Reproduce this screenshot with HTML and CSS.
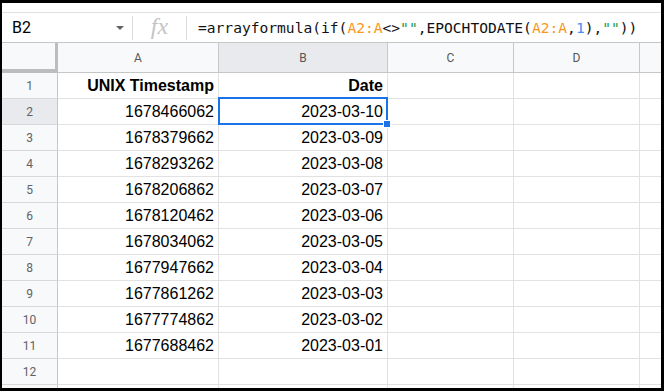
FILE: index.html
```html
<!DOCTYPE html>
<html lang="en">
<head>
  <meta charset="UTF-8">
  <title>EPOCHTODATE</title>
  <link rel="stylesheet" href="styles.css">
</head>
<body>
  <div class="frame">
    <div class="sheet">
      <div class="formula-bar">
        <div class="name-box">B2</div>
        <span class="caret"></span>
        <span class="sep"></span>
        <span class="fx">fx</span>
        <span class="sep"></span>
        <div class="formula">=arrayformula(if(<span class="ref">A2:A</span>&lt;&gt;<span class="str">""</span>,EPOCHTODATE(<span class="ref">A2:A</span>,<span class="num">1</span>),<span class="str">""</span>))</div>
      </div>

      <table class="grid">
        <colgroup>
          <col class="c-rows">
          <col class="c-a">
          <col class="c-b">
          <col class="c-c">
          <col class="c-d">
          <col>
        </colgroup>
        <thead>
          <tr>
            <th class="corner"></th>
            <th>A</th>
            <th class="active">B</th>
            <th>C</th>
            <th>D</th>
            <th></th>
          </tr>
        </thead>
        <tbody id="rows"></tbody>
      </table>
    </div>
  </div>

  <script>
    const data = [
      ['1678466062', '2023-03-10'],
      ['1678379662', '2023-03-09'],
      ['1678293262', '2023-03-08'],
      ['1678206862', '2023-03-07'],
      ['1678120462', '2023-03-06'],
      ['1678034062', '2023-03-05'],
      ['1677947662', '2023-03-04'],
      ['1677861262', '2023-03-03'],
      ['1677774862', '2023-03-02'],
      ['1677688462', '2023-03-01']
    ];

    let html = '<tr><td class="row-head">1</td><td class="bold">UNIX Timestamp</td><td class="bold">Date</td><td></td><td></td><td></td></tr>';
    data.forEach(function (row, i) {
      const n = i + 2;
      const head = n === 2 ? 'row-head active' : 'row-head';
      const dateCell = n === 2
        ? '<td class="selected">' + row[1] + '<div class="sel-box"></div><div class="handle"></div></td>'
        : '<td>' + row[1] + '</td>';
      html += '<tr><td class="' + head + '">' + n + '</td><td>' + row[0] + '</td>' + dateCell + '<td></td><td></td><td></td></tr>';
    });
    html += '<tr><td class="row-head">12</td><td></td><td></td><td></td><td></td><td></td></tr>';
    html += '<tr><td class="row-head"></td><td></td><td></td><td></td><td></td><td></td></tr>';
    document.getElementById('rows').innerHTML = html;
  </script>
</body>
</html>
```

FILE: styles.css
```css
html, body {
  margin: 0;
  height: 100%;
  background: #000;
}

.frame {
  height: 391px;
  box-sizing: border-box;
  padding: 3px 3px 3px 2px;
}

.sheet {
  height: 100%;
  background: #fff;
  overflow: hidden;
  padding-top: 9px;
  box-sizing: border-box;
}

.formula-bar {
  display: flex;
  align-items: center;
  height: 29px;
  border-top: 1px solid #e1e1e1;
  border-bottom: 1px solid #c4c7c5;
  font-family: Roboto, "Liberation Sans", sans-serif;
}

.name-box {
  width: 104px;
  padding-left: 10px;
  font-size: 16px;
  color: #000;
}

.caret {
  width: 0;
  height: 0;
  border-left: 4px solid transparent;
  border-right: 4px solid transparent;
  border-top: 4px solid #5f6368;
  margin-right: 8px;
}

.sep {
  width: 1px;
  height: 24px;
  background: #dadce0;
}

.fx {
  width: 53px;
  text-align: center;
  font-family: "Liberation Serif", serif;
  font-style: italic;
  font-size: 24px;
  color: #c4c4c4;
  line-height: 1;
  margin-top: -3px;
}

.formula {
  padding-left: 11px;
  font-family: "DejaVu Sans Mono", monospace;
  font-size: 14.6px;
  color: #111;
  white-space: nowrap;
}

.ref { color: #f7981d; }
.str { color: #1e9c47; }
.num { color: #4a8bf5; }

/* grid */
.grid {
  border-collapse: separate;
  border-spacing: 0;
  table-layout: fixed;
  width: 660px;
  font-family: "Liberation Sans", Arial, sans-serif;
}

.c-rows { width: 56px; }
.c-a { width: 161px; }
.c-b { width: 169px; }
.c-c { width: 126px; }
.c-d { width: 126px; }

.grid th {
  height: 29px;
  padding: 0;
  background: #f8f9fa;
  border-right: 1px solid #c7c7c7;
  border-bottom: 1px solid #c4c7c5;
  font-family: Roboto, "Liberation Sans", sans-serif;
  font-weight: normal;
  font-size: 12px;
  color: #575757;
}

.grid th.active {
  background: #e8eaed;
}

.grid th.corner {
  border-right: 3px solid #bdbdbd;
  border-bottom: 4px solid #bdbdbd;
  height: 26px;
}

.grid td {
  height: 25px;
  padding: 0 4px 0 0;
  border-right: 1px solid #e2e2e2;
  border-bottom: 1px solid #e2e2e2;
  text-align: right;
  font-size: 16px;
  color: #000;
  white-space: nowrap;
}

.grid td.row-head {
  padding: 0;
  text-align: center;
  background: #f8f9fa;
  border-right: 1px solid #c7c7c7;
  border-bottom: 1px solid #d8d8d8;
  font-family: Roboto, "Liberation Sans", sans-serif;
  font-size: 12px;
  color: #5f6368;
}

.grid td.row-head.active {
  background: #e8eaed;
}

.grid td.bold {
  font-weight: bold;
}

.grid td.selected {
  position: relative;
}

.sel-box {
  position: absolute;
  left: -1px;
  top: -2px;
  right: -1px;
  bottom: -1px;
  border: 2px solid #1a73e8;
}

.handle {
  position: absolute;
  right: -4px;
  bottom: -4px;
  width: 6px;
  height: 6px;
  background: #1a73e8;
  border: 1px solid #fff;
}
```
